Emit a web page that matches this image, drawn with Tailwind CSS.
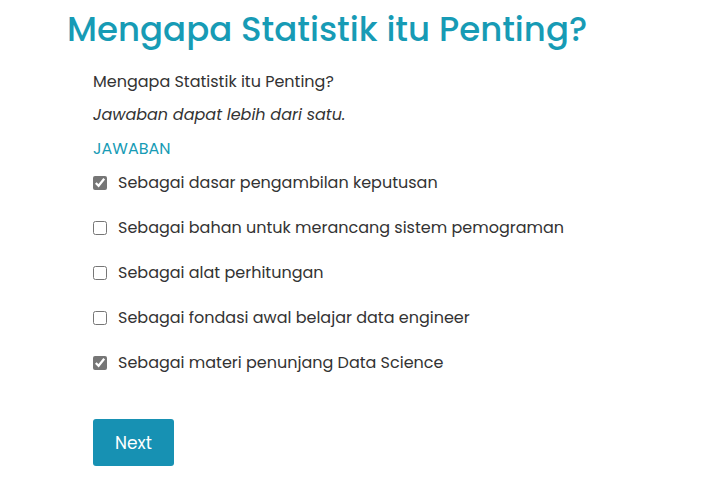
<!DOCTYPE html>
<html lang="id">
<head>
<meta charset="utf-8">
<meta name="viewport" content="width=device-width, initial-scale=1">
<title>Mengapa Statistik itu Penting?</title>
<script src="https://cdn.jsdelivr.net/npm/@tailwindcss/browser@4"></script>
</head>
<body class="bg-white font-['Poppins','Inter',sans-serif] text-base text-[#333333]">
<main class="px-[67px] pb-9">
  <h1 class="pt-1 text-[34px] leading-[50px] font-medium text-[#179bb5]">Mengapa Statistik itu Penting?</h1>
  <form class="px-[26px] pt-4">
    <p class="leading-6">Mengapa Statistik itu Penting?</p>
    <p class="mt-[9px] leading-6 italic">Jawaban dapat lebih dari satu.</p>
    <fieldset>
      <legend class="pt-2.5 leading-6 text-[#179bb5]">JAWABAN</legend>
      <div class="flex flex-col items-start gap-[21px] pt-2.5">
        <label class="flex items-center gap-[11px] leading-6"><input type="checkbox" checked class="size-3.5 shrink-0 accent-[#767676]">Sebagai dasar pengambilan keputusan</label>
        <label class="flex items-center gap-[11px] leading-6"><input type="checkbox" class="size-3.5 shrink-0 accent-[#767676]">Sebagai bahan untuk merancang sistem pemograman</label>
        <label class="flex items-center gap-[11px] leading-6"><input type="checkbox" class="size-3.5 shrink-0 accent-[#767676]">Sebagai alat perhitungan</label>
        <label class="flex items-center gap-[11px] leading-6"><input type="checkbox" class="size-3.5 shrink-0 accent-[#767676]">Sebagai fondasi awal belajar data engineer</label>
        <label class="flex items-center gap-[11px] leading-6"><input type="checkbox" checked class="size-3.5 shrink-0 accent-[#767676]">Sebagai materi penunjang Data Science</label>
      </div>
    </fieldset>
    <button type="button" class="mt-11 rounded-[3px] bg-[#1791b3] px-[22px] pt-3 pb-2.5 text-[17px] leading-[25px] text-white">Next</button>
  </form>
</main>
</body>
</html>
